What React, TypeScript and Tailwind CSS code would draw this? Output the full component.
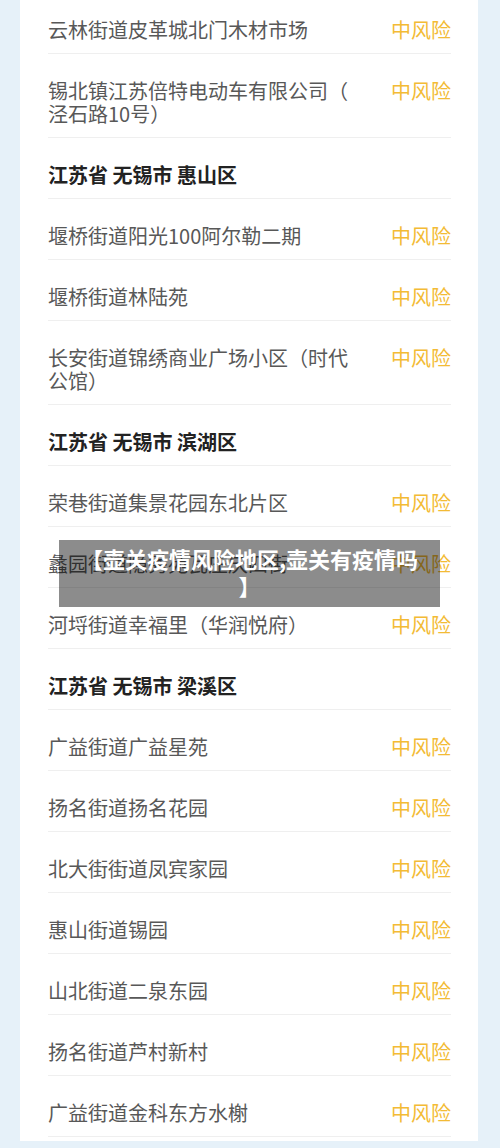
// RiskAreaList — medium-risk area listing for Wuxi districts, with the
// article title caption laid over the middle of the list.

type Row =
  | { kind: "area"; name: string; level: string }
  | { kind: "district"; name: string };

const ROWS: Row[] = [
  { kind: "area", name: "云林街道皮革城北门木材市场", level: "中风险" },
  { kind: "area", name: "锡北镇江苏倍特电动车有限公司（泾石路10号）", level: "中风险" },
  { kind: "district", name: "江苏省 无锡市 惠山区" },
  { kind: "area", name: "堰桥街道阳光100阿尔勒二期", level: "中风险" },
  { kind: "area", name: "堰桥街道林陆苑", level: "中风险" },
  { kind: "area", name: "长安街道锦绣商业广场小区（时代公馆）", level: "中风险" },
  { kind: "district", name: "江苏省 无锡市 滨湖区" },
  { kind: "area", name: "荣巷街道集景花园东北片区", level: "中风险" },
  { kind: "area", name: "蠡园街道隐秀苑瓦庄庆四街", level: "中风险" },
  { kind: "area", name: "河埒街道幸福里（华润悦府）", level: "中风险" },
  { kind: "district", name: "江苏省 无锡市 梁溪区" },
  { kind: "area", name: "广益街道广益星苑", level: "中风险" },
  { kind: "area", name: "扬名街道扬名花园", level: "中风险" },
  { kind: "area", name: "北大街街道凤宾家园", level: "中风险" },
  { kind: "area", name: "惠山街道锡园", level: "中风险" },
  { kind: "area", name: "山北街道二泉东园", level: "中风险" },
  { kind: "area", name: "扬名街道芦村新村", level: "中风险" },
  { kind: "area", name: "广益街道金科东方水榭", level: "中风险" },
];

export default function App() {
  return (
    <div className="relative h-[1148px] w-[500px] overflow-hidden bg-[#e6f1f9] font-['Noto_Sans_CJK_SC','Noto_Sans',sans-serif]">
      <div className="ml-[20px] mr-[22px] h-full bg-white pl-[28px] pr-[27px]">
        <ul className="-mt-[7px]">
          {ROWS.map((row, i) =>
            row.kind === "district" ? (
              <li
                key={i}
                className="border-b border-[#efefef] pt-[25px] pb-[12px] text-[20px] leading-[23px] font-bold text-[#222222]"
              >
                {row.name}
              </li>
            ) : (
              <li
                key={i}
                className="flex items-start gap-[38px] border-b border-[#efefef] pt-[25px] pb-[12px] text-[20px] leading-[23px]"
              >
                <span className="flex-1 text-[#585858] [line-break:anywhere]">{row.name}</span>
                <span className="flex-none text-[#f3bb35]">{row.level}</span>
              </li>
            )
          )}
        </ul>
      </div>

      {/* Title caption over the list */}
      <div className="absolute left-[59px] top-[540px] w-[381px] bg-black/45 px-[18px] pt-[5px] pb-[8px] text-center text-[22px] leading-[27px] font-bold text-white [line-break:anywhere]">
        【壶关疫情风险地区,壶关有疫情吗】
      </div>
    </div>
  );
}
